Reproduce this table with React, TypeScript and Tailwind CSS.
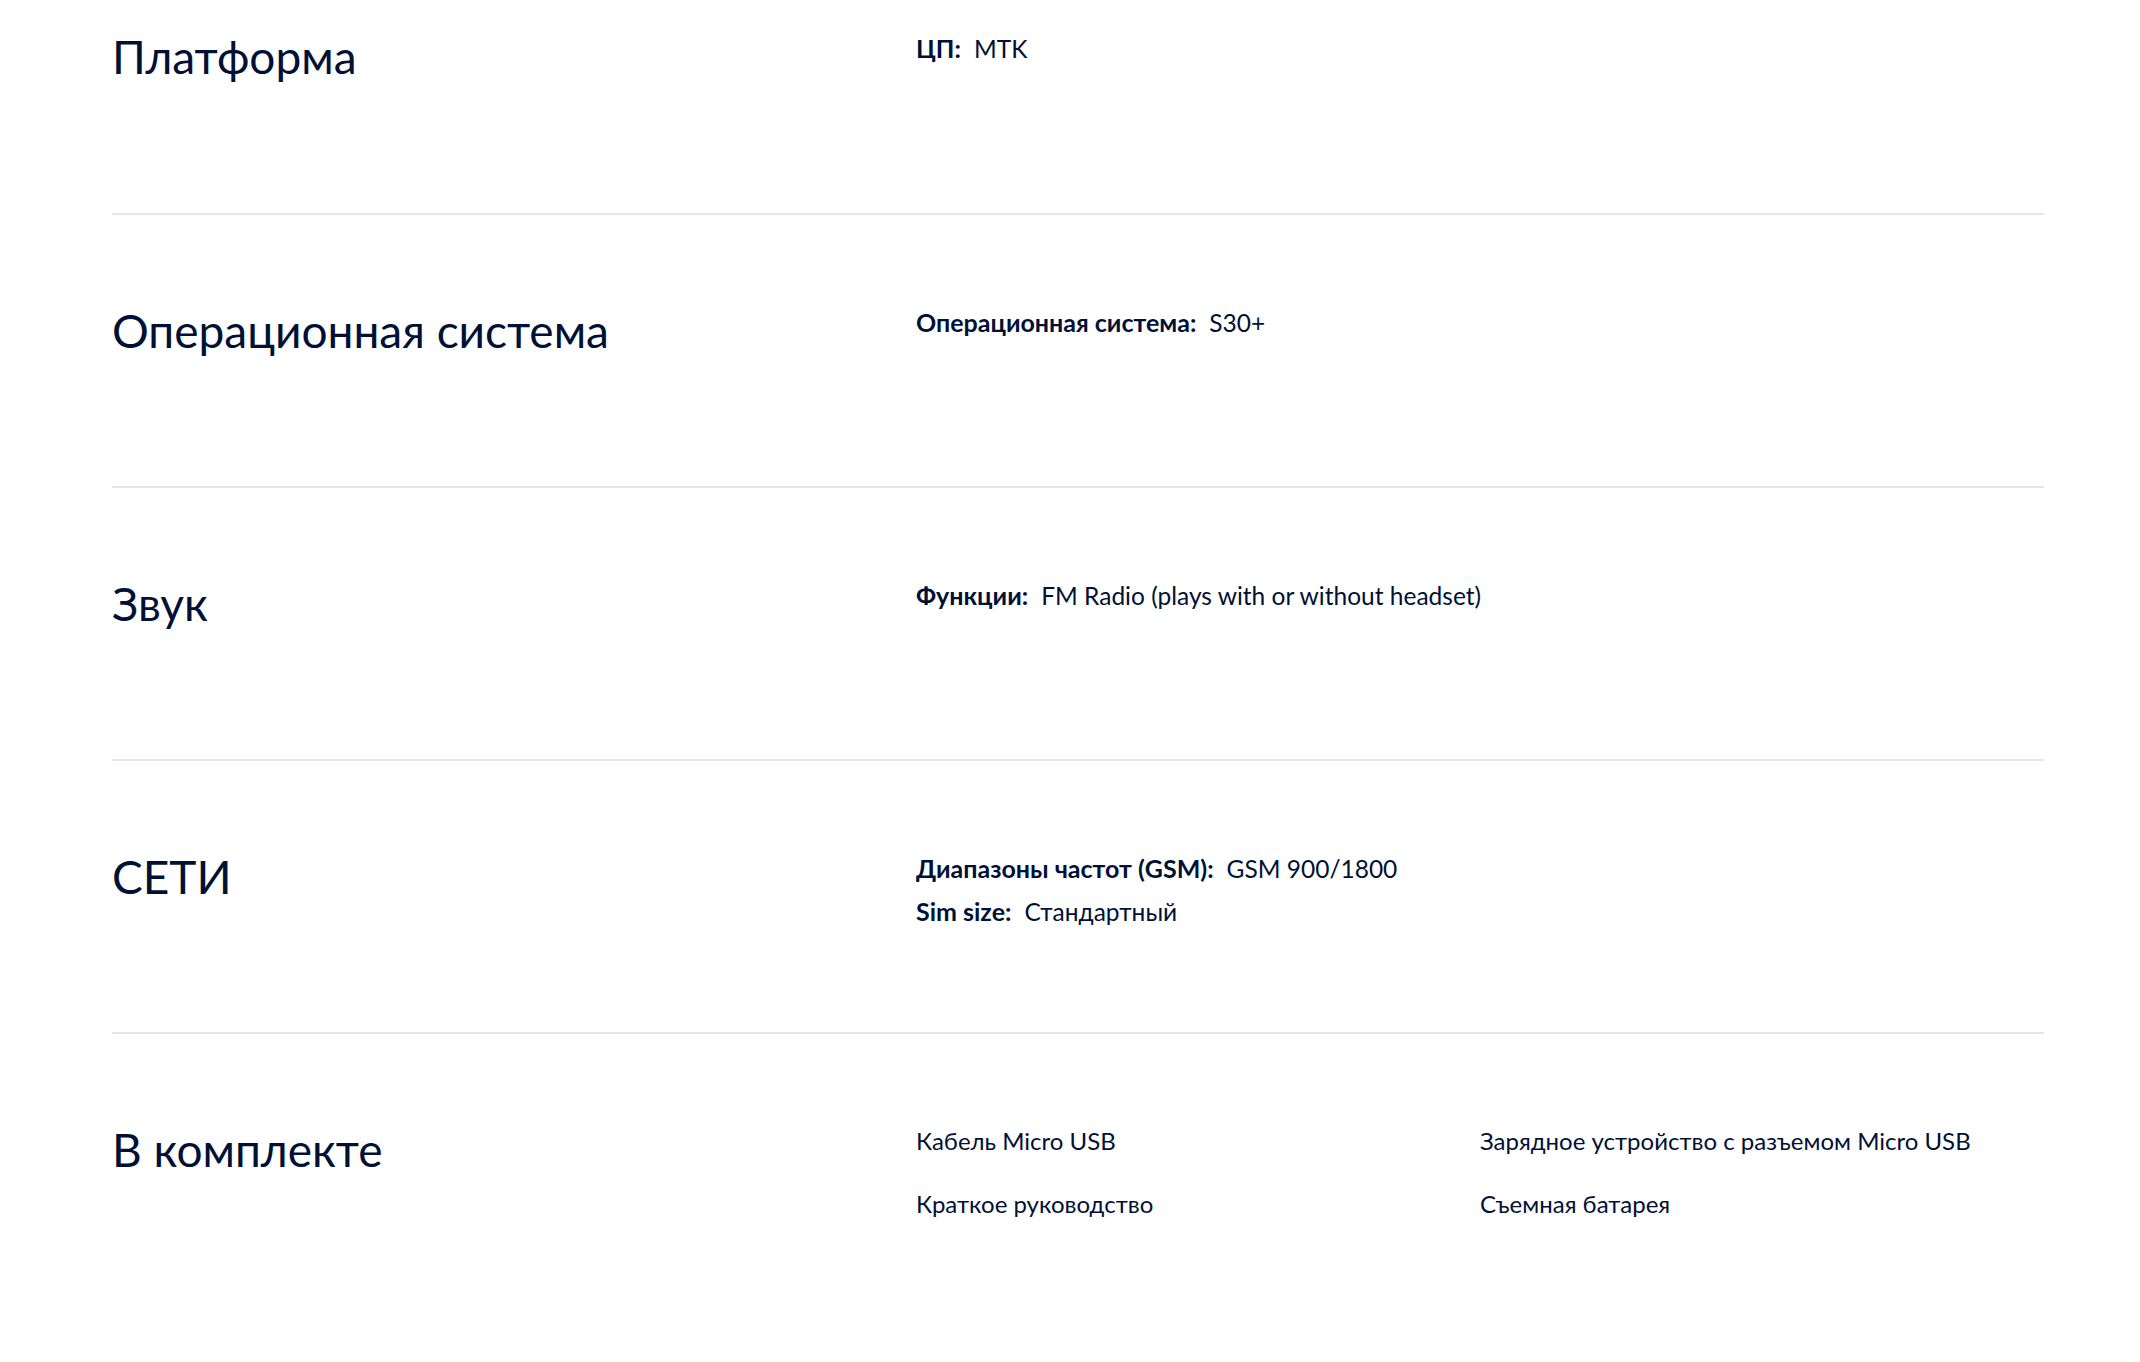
import React from "react";

type Spec = { label: string; value: string };

const sections: { title: string; specs?: Spec[]; items?: string[] }[] = [
  { title: "Платформа", specs: [{ label: "ЦП:", value: "MTK" }] },
  { title: "Операционная система", specs: [{ label: "Операционная система:", value: "S30+" }] },
  { title: "Звук", specs: [{ label: "Функции:", value: "FM Radio (plays with or without headset)" }] },
  {
    title: "СЕТИ",
    specs: [
      { label: "Диапазоны частот (GSM):", value: "GSM 900/1800" },
      { label: "Sim size:", value: "Стандартный" },
    ],
  },
  {
    title: "В комплекте",
    items: [
      "Кабель Micro USB",
      "Зарядное устройство с разъемом Micro USB",
      "Краткое руководство",
      "Съемная батарея",
    ],
  },
];

export default function App() {
  return (
    <div
      className="min-h-[1362px] w-full bg-white text-[#001135]"
      style={{ fontFamily: "Lato, 'Noto Sans', sans-serif" }}
    >
      <div className="ml-[112px] w-[1932px]">
        {sections.map((s, i) => {
          const first = i === 0;
          const last = i === sections.length - 1;
          return (
            <section
              key={s.title}
              className={
                "grid grid-cols-[804px_1128px] items-start " +
                (first
                  ? "h-[215px] pt-[27px] border-b-2 border-[#e6e6e6]"
                  : last
                  ? "pt-[86px]"
                  : "h-[273px] pt-[86px] border-b-2 border-[#e6e6e6]")
              }
            >
              <h2 className="mt-[2px] text-[46px] font-normal leading-[56px]">{s.title}</h2>
              {s.specs && (
                <div className="flex flex-col">
                  {s.specs.map((sp) => (
                    <div key={sp.label} className="text-[25px] leading-[42px]">
                      <span className="font-bold">{sp.label}</span>
                      <span className="ml-[13px] text-[24.5px]">{sp.value}</span>
                    </div>
                  ))}
                </div>
              )}
              {s.items && (
                <div className="grid grid-cols-2 gap-y-[21px]">
                  {s.items.map((it) => (
                    <div key={it} className="text-[24px] leading-[42px]">
                      {it}
                    </div>
                  ))}
                </div>
              )}
            </section>
          );
        })}
      </div>
    </div>
  );
}
